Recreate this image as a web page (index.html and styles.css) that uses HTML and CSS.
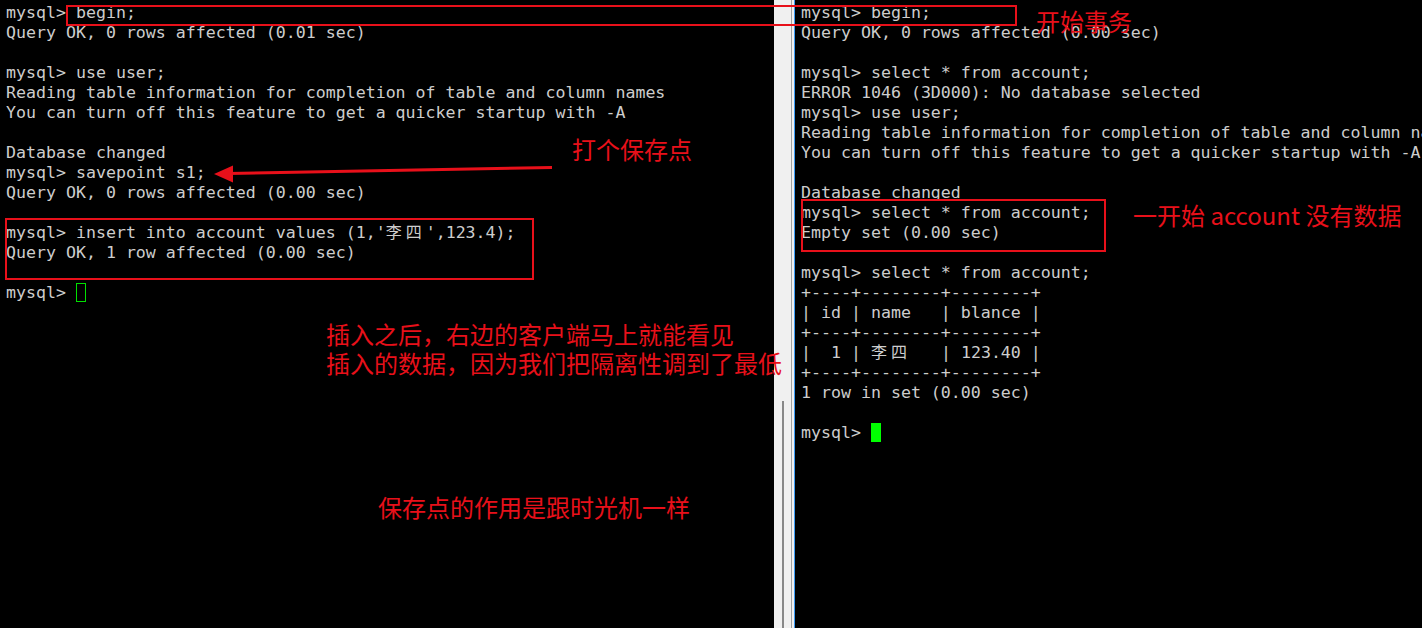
FILE: index.html
```
<!DOCTYPE html>
<html lang="zh-CN">
<head>
    <meta charset="UTF-8">
    <title>savepoint 演示</title>
    <link rel="stylesheet" href="styles.css">
</head>
<body>
    <div class="stage">
        <div class="term term-left">
            <div class="ln">mysql&gt; begin;</div>
            <div class="ln">Query OK, 0 rows affected (0.01 sec)</div>
            <div class="ln"></div>
            <div class="ln">mysql&gt; use user;</div>
            <div class="ln">Reading table information for completion of table and column names</div>
            <div class="ln">You can turn off this feature to get a quicker startup with -A</div>
            <div class="ln"></div>
            <div class="ln">Database changed</div>
            <div class="ln">mysql&gt; savepoint s1;</div>
            <div class="ln">Query OK, 0 rows affected (0.00 sec)</div>
            <div class="ln"></div>
            <div class="ln">mysql&gt; insert into account values (1,'<span class="zh">李四</span>',123.4);</div>
            <div class="ln">Query OK, 1 row affected (0.00 sec)</div>
            <div class="ln"></div>
            <div class="ln">mysql&gt; <span class="cursor cursor-idle"></span></div>
        </div>

        <div class="divider">
            <div class="track">
                <div class="thumb"></div>
            </div>
        </div>

        <div class="term term-right">
            <div class="ln">mysql&gt; begin;</div>
            <div class="ln">Query OK, 0 rows affected (0.00 sec)</div>
            <div class="ln"></div>
            <div class="ln">mysql&gt; select * from account;</div>
            <div class="ln">ERROR 1046 (3D000): No database selected</div>
            <div class="ln">mysql&gt; use user;</div>
            <div class="ln">Reading table information for completion of table and column names</div>
            <div class="ln">You can turn off this feature to get a quicker startup with -A</div>
            <div class="ln"></div>
            <div class="ln">Database changed</div>
            <div class="ln">mysql&gt; select * from account;</div>
            <div class="ln">Empty set (0.00 sec)</div>
            <div class="ln"></div>
            <div class="ln">mysql&gt; select * from account;</div>
            <div class="ln">+----+--------+--------+</div>
            <div class="ln">| id | name   | blance |</div>
            <div class="ln">+----+--------+--------+</div>
            <div class="ln">|  1 | <span class="zh">李四</span>   | 123.40 |</div>
            <div class="ln">+----+--------+--------+</div>
            <div class="ln">1 row in set (0.00 sec)</div>
            <div class="ln"></div>
            <div class="ln">mysql&gt; <span class="cursor cursor-on"></span></div>
        </div>

        <!-- 标注 -->
        <div class="mark mark-begin"></div>
        <div class="mark mark-insert"></div>
        <div class="mark mark-empty"></div>

        <svg class="arrow" width="1422" height="628" viewBox="0 0 1422 628">
            <line x1="552" y1="167.5" x2="228" y2="173.5" stroke="#e8101a" stroke-width="3"/>
            <polygon points="214,174 233,165.5 233,182.5" fill="#e8101a"/>
        </svg>

        <div class="note note-begin">开始事务</div>
        <div class="note note-save">打个保存点</div>
        <div class="note note-insert">插入之后，右边的客户端马上就能看见<br>插入的数据，因为我们把隔离性调到了最低</div>
        <div class="note note-empty">一开始 account 没有数据</div>
        <div class="note note-time">保存点的作用是跟时光机一样</div>
    </div>
</body>
</html>
```

FILE: styles.css
```
body {
    margin: 0;
    background-color: #000;
}

.stage {
    position: relative;
    display: flex;
    width: 1422px;
    height: 628px;
    overflow: hidden;
    background-color: #000;
}

.term {
    box-sizing: border-box;
    padding: 3px 0 0 6px;
    overflow: hidden;
    color: #cdcdcd;
    font-family: "DejaVu Sans Mono", "Liberation Mono", monospace;
    font-size: 16.6px;
}

.term-left {
    width: 774px;
}

.term-right {
    flex: 1;
}

.ln {
    height: 20px;
    line-height: 20px;
    white-space: pre;
    overflow: hidden;
}

/* 终端里的中文占两格 */
.zh {
    font-family: "Noto Sans CJK SC", sans-serif;
    font-size: 16px;
    line-height: 0;
    letter-spacing: 4px;
}

.cursor {
    display: inline-block;
    box-sizing: border-box;
    width: 10px;
    height: 19px;
    vertical-align: -4px;
}

.cursor-idle {
    border: 1px solid #00e000;
}

.cursor-on {
    background-color: #00ff00;
}

/* 中间的分隔条 */
.divider {
    width: 20px;
    background-color: #f0f0f0;
    border-right: 1px solid #3d9cf5;
    display: flex;
}

.track {
    width: 17px;
    border-right: 1px solid #a0a0a0;
    padding-top: 401px;
}

.thumb {
    width: 2px;
    height: 100%;
    margin-left: 8px;
    background-color: #888;
}

.mark {
    position: absolute;
    box-sizing: border-box;
    border: 2px solid #e8101a;
}

.mark-begin {
    left: 66px;
    top: 5px;
    width: 951px;
    height: 21px;
}

.mark-insert {
    left: 5px;
    top: 218px;
    width: 529px;
    height: 62px;
}

.mark-empty {
    left: 801px;
    top: 199px;
    width: 305px;
    height: 53px;
}

.arrow {
    position: absolute;
    left: 0;
    top: 0;
}

.note {
    position: absolute;
    color: #e8101a;
    font-family: "Noto Sans CJK SC", sans-serif;
    font-size: 24px;
    line-height: 24px;
    white-space: nowrap;
}

.note-begin {
    left: 1036px;
    top: 9px;
}

.note-save {
    left: 572px;
    top: 137px;
}

.note-insert {
    left: 326px;
    top: 319px;
    line-height: 29px;
}

.note-empty {
    left: 1133px;
    top: 203px;
}

.note-time {
    left: 378px;
    top: 495px;
}
```
